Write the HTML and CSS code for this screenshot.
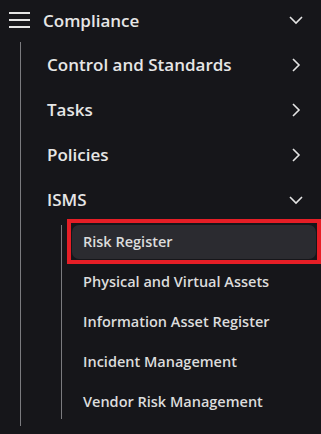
FILE: index.html
```html
<!DOCTYPE html>
<html lang="en">
<head>
    <meta charset="UTF-8">
    <title>Compliance menu</title>
    <link rel="stylesheet" href="styles.css">
</head>
<body>

<nav class="sidebar">
    <div class="section-head">
        <svg class="burger" width="22" height="16" viewBox="0 0 22 16">
            <path d="M0 1h21M0 8h21M0 15h21" stroke="#e4e4e4" stroke-width="2" fill="none"/>
        </svg>
        <span class="section-title">Compliance</span>
        <svg class="chev" width="16" height="16" viewBox="0 0 16 16">
            <polyline points="2,5 8,11 14,5" stroke="#e4e4e4" stroke-width="1.6" fill="none"/>
        </svg>
    </div>

    <ul class="menu">
        <li class="menu-item">
            <span>Control and Standards</span>
            <svg class="chev" width="16" height="16" viewBox="0 0 16 16"><polyline points="5,2 11,8 5,14" stroke="#e4e4e4" stroke-width="1.6" fill="none"/></svg>
        </li>
        <li class="menu-item">
            <span>Tasks</span>
            <svg class="chev" width="16" height="16" viewBox="0 0 16 16"><polyline points="5,2 11,8 5,14" stroke="#e4e4e4" stroke-width="1.6" fill="none"/></svg>
        </li>
        <li class="menu-item">
            <span>Policies</span>
            <svg class="chev" width="16" height="16" viewBox="0 0 16 16"><polyline points="5,2 11,8 5,14" stroke="#e4e4e4" stroke-width="1.6" fill="none"/></svg>
        </li>
        <li class="menu-item">
            <span>ISMS</span>
            <svg class="chev" width="16" height="16" viewBox="0 0 16 16"><polyline points="2,5 8,11 14,5" stroke="#e4e4e4" stroke-width="1.6" fill="none"/></svg>
        </li>
        <li>
            <ul class="submenu">
                <li class="sub-item active">Risk Register</li>
                <li class="sub-item">Physical and Virtual Assets</li>
                <li class="sub-item">Information Asset Register</li>
                <li class="sub-item">Incident Management</li>
                <li class="sub-item">Vendor Risk Management</li>
            </ul>
        </li>
    </ul>
</nav>

</body>
</html>
```

FILE: styles.css
```css
html, body { margin: 0; padding: 0; }
body { background: #16161a; color: #e6e6e6; font-family: "Open Sans", "Noto Sans", sans-serif; font-weight: 600; width: 321px; height: 434px; overflow: hidden; }
ul { list-style: none; margin: 0; padding: 0; }

.sidebar { padding-right: 17px; }
.section-head { display: flex; align-items: center; height: 40px; padding-left: 9px; }
.burger { flex: none; }
.section-title { flex: 1; margin-left: 12px; font-size: 17px; }
.chev { flex: none; }

.menu { margin: 2px 0 0 20px; border-left: 1px solid #7b7b7f; padding-bottom: 7px; }
.menu-item { display: flex; align-items: center; justify-content: space-between; height: 45px; padding-left: 26px; font-size: 17px; }

.submenu { margin: 3px -12px 0 40px; border-left: 1px solid #7b7b7f; display: flex; flex-direction: column; gap: 6px; }
.sub-item { height: 34px; line-height: 34px; margin-left: 10px; padding-left: 11px; border-radius: 7px; font-size: 14.5px; color: #dcdcdc; }
.sub-item.active { position: relative; background: #2b2b30; }
/* red highlight frame drawn over the active entry */
.sub-item.active::after { content: ''; position: absolute; top: -6px; right: -5px; bottom: -5px; left: -5px; border: 4px solid #e61e26; }
```
